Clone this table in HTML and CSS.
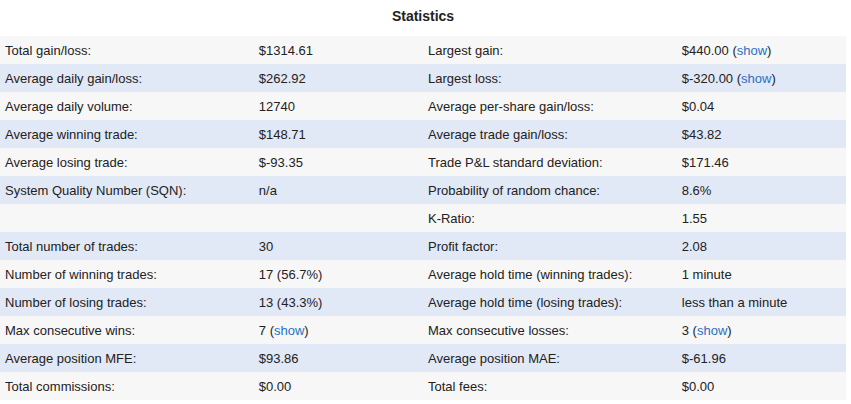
FILE: index.html
```html
<!DOCTYPE html>
<html>
<head>
<meta charset="utf-8">
<link rel="stylesheet" href="styles.css">
</head>
<body>
<div class="stats">
  <h2 class="stats-title">Statistics</h2>
  <table class="stats-table">
    <colgroup><col class="c-label"><col class="c-value"><col class="c-label"><col class="c-value"></colgroup>
    <tbody>
      <tr><td>Total gain/loss:</td><td>$1314.61</td><td>Largest gain:</td><td>$440.00 (<a href="#">show</a>)</td></tr>
      <tr><td>Average daily gain/loss:</td><td>$262.92</td><td>Largest loss:</td><td>$-320.00 (<a href="#">show</a>)</td></tr>
      <tr><td>Average daily volume:</td><td>12740</td><td>Average per-share gain/loss:</td><td>$0.04</td></tr>
      <tr><td>Average winning trade:</td><td>$148.71</td><td>Average trade gain/loss:</td><td>$43.82</td></tr>
      <tr><td>Average losing trade:</td><td>$-93.35</td><td>Trade P&amp;L standard deviation:</td><td>$171.46</td></tr>
      <tr><td>System Quality Number (SQN):</td><td>n/a</td><td>Probability of random chance:</td><td>8.6%</td></tr>
      <tr><td></td><td></td><td>K-Ratio:</td><td>1.55</td></tr>
      <tr><td>Total number of trades:</td><td>30</td><td>Profit factor:</td><td>2.08</td></tr>
      <tr><td>Number of winning trades:</td><td>17 (56.7%)</td><td>Average hold time (winning trades):</td><td>1 minute</td></tr>
      <tr><td>Number of losing trades:</td><td>13 (43.3%)</td><td>Average hold time (losing trades):</td><td>less than a minute</td></tr>
      <tr><td>Max consecutive wins:</td><td>7 (<a href="#">show</a>)</td><td>Max consecutive losses:</td><td>3 (<a href="#">show</a>)</td></tr>
      <tr><td>Average position MFE:</td><td>$93.86</td><td>Average position MAE:</td><td>$-61.96</td></tr>
      <tr><td>Total commissions:</td><td>$0.00</td><td>Total fees:</td><td>$0.00</td></tr>
    </tbody>
  </table>
</div>
</body>
</html>
```
FILE: styles.css
```css
html, body {
  margin: 0;
  padding: 0;
  background: #ffffff;
}
body {
  font-family: "Liberation Sans", Arial, Helvetica, sans-serif;
  color: #222222;
}
.stats {
  width: 846px;
}
.stats-title {
  margin: 0;
  height: 36px;
  line-height: 32px;
  font-size: 14px;
  font-weight: bold;
  text-align: center;
  color: #222222;
}
.stats-table {
  width: 846px;
  border-collapse: collapse;
  border-spacing: 0;
  table-layout: fixed;
  font-size: 13px;
}
.c-label { width: 30%; }
.c-value { width: 20%; }
.stats-table td {
  height: 28px;
  padding: 0 5px;
  box-sizing: border-box;
  vertical-align: middle;
  white-space: nowrap;
}
.stats-table tr:nth-child(odd) { background: #f7f7f7; }
.stats-table tr:nth-child(even) { background: #e1e8f6; }
.stats-table a {
  color: #2a70c2;
  text-decoration: none;
}
```
